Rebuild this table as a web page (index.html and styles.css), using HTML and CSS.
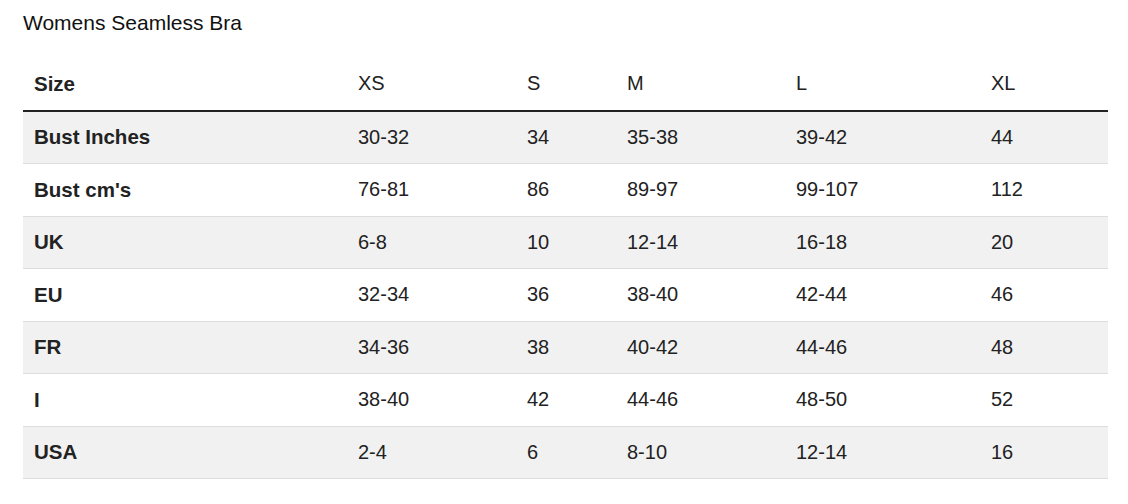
FILE: index.html
```html
<!DOCTYPE html>
<html>
<head>
<meta charset="utf-8">
<link rel="stylesheet" href="styles.css">
</head>
<body>
<div class="page">
  <h1 class="title">Womens Seamless Bra</h1>
  <table class="size-table">
    <colgroup>
      <col class="c-label"><col class="c-xs"><col class="c-s"><col class="c-m"><col class="c-l"><col class="c-xl">
    </colgroup>
    <thead>
      <tr><th class="label">Size</th><th>XS</th><th>S</th><th>M</th><th>L</th><th>XL</th></tr>
    </thead>
    <tbody>
      <tr><td class="label">Bust Inches</td><td>30-32</td><td>34</td><td>35-38</td><td>39-42</td><td>44</td></tr>
      <tr><td class="label">Bust cm's</td><td>76-81</td><td>86</td><td>89-97</td><td>99-107</td><td>112</td></tr>
      <tr><td class="label">UK</td><td>6-8</td><td>10</td><td>12-14</td><td>16-18</td><td>20</td></tr>
      <tr><td class="label">EU</td><td>32-34</td><td>36</td><td>38-40</td><td>42-44</td><td>46</td></tr>
      <tr><td class="label">FR</td><td>34-36</td><td>38</td><td>40-42</td><td>44-46</td><td>48</td></tr>
      <tr><td class="label">I</td><td>38-40</td><td>42</td><td>44-46</td><td>48-50</td><td>52</td></tr>
      <tr><td class="label">USA</td><td>2-4</td><td>6</td><td>8-10</td><td>12-14</td><td>16</td></tr>
    </tbody>
  </table>
</div>
</body>
</html>
```

FILE: styles.css
```css
html, body {
  margin: 0;
  padding: 0;
  background: #ffffff;
}
body {
  font-family: "Liberation Sans", Arial, sans-serif;
  color: #222222;
}
.page {
  padding: 10px 20px 0 23px;
}
.title {
  margin: 0;
  font-size: 21px;
  line-height: 25px;
  font-weight: normal;
  color: #111111;
}
.size-table {
  margin-top: 23px;
  width: 1085px;
  border-collapse: collapse;
  table-layout: fixed;
  font-size: 20px;
}
.c-label { width: 324px; }
.c-xs { width: 169px; }
.c-s { width: 100px; }
.c-m { width: 169px; }
.c-l { width: 195px; }
.c-xl { width: 128px; }
.size-table th,
.size-table td {
  text-align: left;
  padding: 0 11px;
  height: 51.5px;
  font-weight: normal;
  vertical-align: middle;
  color: #222222;
}
.size-table thead th {
  border-bottom: 2px solid #222222;
}
.size-table tbody td {
  border-bottom: 1px solid #dddddd;
}
.size-table tbody tr:nth-child(odd) {
  background: #f1f1f1;
}
.size-table .label {
  font-weight: bold;
  font-size: 20.5px;
}
```
